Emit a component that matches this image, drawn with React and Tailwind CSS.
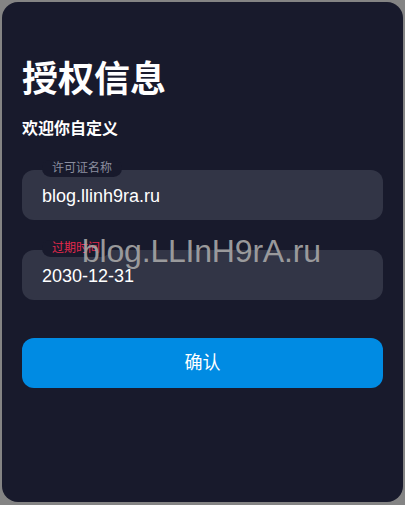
import React from 'react';

const font = { fontFamily: '"Liberation Sans", "Noto Sans CJK SC", sans-serif' };

function Field({ label, value, labelClass }) {
    return (
        <div className="relative">
            <span className={`absolute left-5 -top-[10px] px-[10px] h-[17px] leading-[17px] rounded-full bg-[#181a2c] text-[12px] ${labelClass}`}>
                {label}
            </span>
            <div className="h-[50px] rounded-xl bg-[#323546] flex items-center pl-5 pt-[2px] text-[18px] text-white">
                {value}
            </div>
        </div>
    );
}

export default function App() {
    return (
        <div className="min-h-[505px] bg-[#848484] p-[2px]" style={font}>
            <div className="relative h-[500px] rounded-2xl bg-[#181a2c] px-5 pt-[56px]">
                <h1 className="text-[36px] leading-[43px] font-bold text-white">授权信息</h1>
                <p className="mt-4 text-[16px] leading-6 font-bold text-white">欢迎你自定义</p>

                <div className="mt-[29px] flex flex-col gap-[30px]">
                    <Field label="许可证名称" value="blog.llinh9ra.ru" labelClass="text-[#8b8e9f]" />
                    <Field label="过期时间" value="2030-12-31" labelClass="text-[#e3294c]" />
                </div>

                <button className="mt-[38px] w-full h-[50px] rounded-xl bg-[#008be3] text-white text-[18px]">
                    确认
                </button>

                {/* watermark */}
                <div className="absolute left-[80px] top-[229px] text-[32px] leading-[40px] tracking-[-0.2px] text-[#a6a6a6] opacity-90 pointer-events-none">
                    blog.LLInH9rA.ru
                </div>
            </div>
        </div>
    );
}
